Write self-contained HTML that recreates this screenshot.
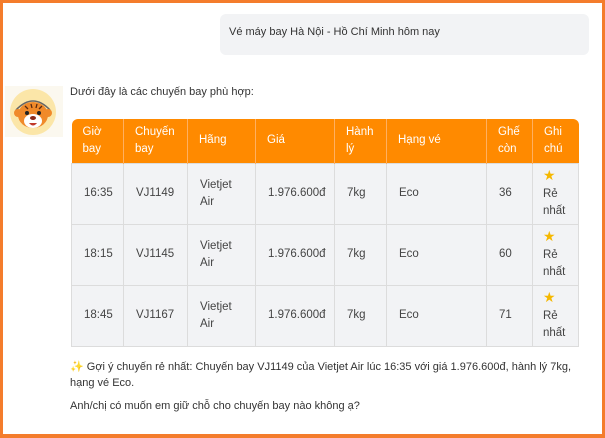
<!DOCTYPE html><html><head><meta charset="utf-8"><style>
*{margin:0;padding:0;box-sizing:border-box}
body{width:605px;height:438px;overflow:hidden;background:#fff;font-family:"Liberation Sans",sans-serif;font-size:11px;color:#333;position:relative}
.frame{position:absolute;left:0;top:0;width:605px;height:438px;border:3px solid #f47c2c;border-bottom-width:4px;border-right-width:3px}
.bub{position:absolute;left:220px;top:14px;width:369px;height:41px;background:#f2f3f5;border-radius:6px;padding:12px 0 0 9px}
.av{position:absolute;left:5px;top:86px;width:58px;height:51px;background:#fbf8ef}
.t{position:absolute;left:70px}
table{position:absolute;left:71px;top:119px;width:507px;border-collapse:collapse;table-layout:fixed;font-size:11.5px}
th{background:#ff8a00;color:#fff;font-weight:normal;text-align:left;padding:0 0 0 11px;height:44px;line-height:17px;border-right:1px solid #ffb060}
th:first-child{border-top-left-radius:6px}th:last-child{border-top-right-radius:6px;border-right:none}
td{background:#f2f3f5;border:1px solid #dcdcdc;padding:0 0 0 12px;line-height:17px;color:#444}
tr.r td{height:61px}
.st{color:#f5b800;font-size:14px;line-height:14px}
</style></head><body>
<div class="frame"></div>
<div class="bub">Vé máy bay Hà Nội - Hồ Chí Minh hôm nay</div>
<div class="av"><svg width="58" height="51" viewBox="0 0 58 51">
<circle cx="28" cy="26" r="23" fill="#fbe6a8"/>
<path d="M11 24 Q28 6 45 24" stroke="#666" stroke-width="1.5" fill="none"/>
<ellipse cx="28" cy="29" rx="15" ry="13" fill="#f08a2a"/>
<circle cx="13" cy="27" r="4" fill="#f08a2a"/><circle cx="43" cy="27" r="4" fill="#f08a2a"/>
<ellipse cx="28" cy="35" rx="9" ry="7" fill="#fff"/>
<circle cx="22" cy="27" r="2" fill="#222"/><circle cx="34" cy="27" r="2" fill="#222"/>
<ellipse cx="28" cy="32" rx="3" ry="2" fill="#8a2a1a"/>
<path d="M24 37 Q28 42 32 37" fill="#c0392b"/>
<path d="M20 20 l3 3 M26 18 l1 4 M32 18 l-1 4 M37 20 l-3 3" stroke="#5a2a10" stroke-width="1.3"/>
</svg></div>
<div class="t" style="top:86px">Dưới đây là các chuyến bay phù hợp:</div>
<table>
<colgroup><col style="width:52px"><col style="width:64px"><col style="width:68px"><col style="width:79px"><col style="width:52px"><col style="width:100px"><col style="width:46px"><col style="width:46px"></colgroup>
<tr><th>Giờ<br>bay</th><th>Chuyến<br>bay</th><th>Hãng</th><th>Giá</th><th>Hành<br>lý</th><th>Hạng vé</th><th>Ghế<br>còn</th><th>Ghi<br>chú</th></tr>
<tr class="r"><td>16:35</td><td>VJ1149</td><td>Vietjet<br>Air</td><td>1.976.600đ</td><td>7kg</td><td>Eco</td><td>36</td><td style="padding-left:10px"><span class="st">★</span><br>Rẻ<br>nhất</td></tr>
<tr class="r"><td>18:15</td><td>VJ1145</td><td>Vietjet<br>Air</td><td>1.976.600đ</td><td>7kg</td><td>Eco</td><td>60</td><td style="padding-left:10px"><span class="st">★</span><br>Rẻ<br>nhất</td></tr>
<tr class="r"><td>18:45</td><td>VJ1167</td><td>Vietjet<br>Air</td><td>1.976.600đ</td><td>7kg</td><td>Eco</td><td>71</td><td style="padding-left:10px"><span class="st">★</span><br>Rẻ<br>nhất</td></tr>
</table>
<div class="t" style="top:359px;line-height:16px;width:530px"><span style="color:#f5b800">✨</span> Gợi ý chuyến rẻ nhất: Chuyến bay VJ1149 của Vietjet Air lúc 16:35 với giá 1.976.600đ, hành lý 7kg,<br>hạng vé Eco.</div>
<div class="t" style="top:400px">Anh/chị có muốn em giữ chỗ cho chuyến bay nào không ạ?</div>
</body></html>
